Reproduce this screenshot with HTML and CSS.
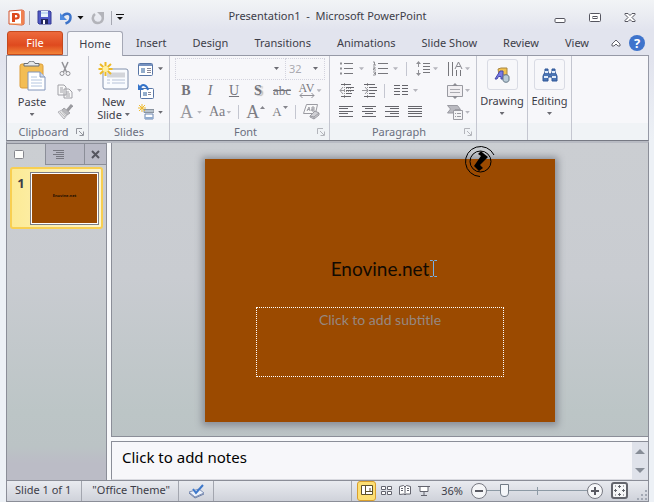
FILE: index.html
```html
<!DOCTYPE html>
<html lang="en">
<head>
<meta charset="utf-8">
<title>Presentation1 - Microsoft PowerPoint</title>
<link rel="stylesheet" href="styles.css">
</head>
<body>
<div class="window">
  <header class="titlebar">
    <div class="quick">
      <button class="tool" aria-label="PowerPoint menu"><svg width="17" height="17" viewBox="0 0 17 17"><path d="M1 2l13-1 2 1v13l-2 1-13-1z" fill="#fff" stroke="#d2502a"/><path d="M13 1l3 1v13l-3 1z" fill="#f08050"/><path d="M2 15h12" stroke="#f5a060"/><path d="M4 4h4.500a3 3 0 0 1 0 6.500H7V13H4z" fill="#dd4a1c"/><path d="M7 6h1a1.200 1.200 0 0 1 0 2.500H7z" fill="#fff"/></svg></button>
      <span class="rule"></span>
      <button class="tool save" aria-label="Save"><svg width="15" height="15" viewBox="0 0 15 15"><path d="M1 1h12l1 1v12H2l-1-1z" fill="#5059c6" stroke="#353b94"/><path d="M4 1h7v6H4z" fill="#e9f2fb"/><path d="M4 9h7v5H4z" fill="#23275d"/><path d="M6 10h2v4H6z" fill="#fff"/><path d="M4 3h7" stroke="#9cc0e5"/></svg></button>
      <button class="tool undo" aria-label="Undo"><svg width="14" height="14" viewBox="0 0 14 14"><path d="M3 6C6 1 12 2 11.500 6.500c0 3-2 5-5 6" fill="none" stroke="#3c73c9" stroke-width="2.500"/><path d="M1 2v7h7z" fill="#4f8be0"/></svg></button>
      <i class="caret black"></i>
      <button class="tool redo" aria-label="Repeat"><svg width="14" height="14" viewBox="0 0 14 14"><path d="M4 3C0 6 2 12 6.500 12S13 8 11 4" fill="none" stroke="#b3b4ba" stroke-width="2.500"/><path d="M6 1h7v7z" fill="#b3b4ba"/></svg></button>
      <span class="rule"></span>
      <button class="tool" aria-label="Customize toolbar"><svg width="8" height="7" viewBox="0 0 8 7"><path d="M0 .5h8" stroke="#111"/><path d="M1 3h6L4 6z" fill="#111"/></svg></button>
    </div>
    <h1>Presentation1 &nbsp;-&nbsp; Microsoft PowerPoint</h1>
    <div class="controls">
      <button class="tool" aria-label="Minimize"><svg width="12" height="12" viewBox="0 0 12 12"><rect x="1" y="6.500" width="10" height="4" rx="1" fill="#fff" stroke="#55555f"/></svg></button>
      <button class="tool" aria-label="Maximize"><svg width="12" height="12" viewBox="0 0 12 12"><rect x=".5" y="1.500" width="11" height="8" rx="1" fill="#fff" stroke="#55555f"/><rect x="4" y="4.500" width="4" height="2" fill="#fff" stroke="#55555f"/></svg></button>
      <button class="tool" aria-label="Close"><svg width="12" height="12" viewBox="0 0 12 12"><path d="M1 1.500h3l2 2 2-2h3v1L8 5.500l3 3v1H8l-2-2-2 2H1v-1l3-3-3-3z" fill="#fff" stroke="#55555f"/></svg></button>
    </div>
  </header>

  <nav class="tabs">
    <button class="tab file">File</button>
    <button class="tab home">Home</button>
    <button class="tab">Insert</button>
    <button class="tab">Design</button>
    <button class="tab">Transitions</button>
    <button class="tab">Animations</button>
    <button class="tab">Slide Show</button>
    <button class="tab">Review</button>
    <button class="tab">View</button>
    <div class="help">
      <button class="tool" aria-label="Minimize the ribbon"><svg width="10" height="8" viewBox="0 0 10 8"><path d="M1 5l4-4 4 4v2H7L5 5 3 7H1z" fill="#fff" stroke="#62626c"/></svg></button>
      <button class="question" aria-label="Help">?</button>
    </div>
  </nav>

  <section class="ribbon">
    <div class="group">
      <div class="body split">
        <button class="big paste"><svg width="27" height="30" viewBox="0 0 27 30"><rect x="1" y="3" width="23" height="24" rx="2" fill="#f3bd54" stroke="#dc9d38"/><path d="M5 5V2.500h4C9-.5 16-.5 16 2.500h4V5z" fill="#e5e8ea" stroke="#696e74"/><path d="M9 11h12l5 5v13H9z" fill="#fff" stroke="#8295ba"/><path d="M21 11v5h5" fill="#cbd7ea" stroke="#8295ba"/><path d="M12 16h6M12 19h11M12 22h11M12 25h11" stroke="#b4c6e0"/></svg><span>Paste</span><i class="caret"></i></button>
        <div class="stack">
          <button class="tool" aria-label="Cut"><svg width="16" height="16" viewBox="0 0 16 16" fill="none" stroke="#929297"><path d="M5 1l4.500 10M11 1L6.500 11" stroke-width="1.500"/><circle cx="5" cy="12.500" r="2"/><circle cx="11" cy="12.500" r="2"/></svg></button>
          <button class="tool" aria-label="Copy"><svg width="16" height="16" viewBox="0 0 16 16" fill="#f8f8f9" stroke="#a0a0a6"><path d="M1 2h6l2 2v8H1zM7 6h5l3 3v6H7z"/><path d="M3 5h3M3 7h3M3 9h3M9 9h3M9 11h4M9 13h4"/></svg><i class="caret pale"></i></button>
          <button class="tool" aria-label="Format Painter"><svg width="16" height="16" viewBox="0 0 16 16"><path d="M15 1l-5 6" stroke="#9a9a9f" stroke-width="3"/><path d="M7 4l6 5-3 2-5-5z" fill="#b8b8bc" stroke="#a4a4a9"/><path d="M5 6l5 5-3 4-6-7z" fill="#e4e4e7" stroke="#b4b4ba"/><path d="M3 8l5 5M5 7l4 5" stroke="#bbb"/></svg></button>
        </div>
      </div>
      <footer><span>Clipboard</span><button class="launch" aria-label="Clipboard options"><svg width="8" height="8" viewBox="0 0 8 8" fill="none" stroke="#92959d"><path d="M.5 6V.5H6M3 3l4 4M7.500 3.500v4h-4"/></svg></button></footer>
    </div>

    <div class="group">
      <div class="body split">
        <button class="big slide-new"><svg width="31" height="30" viewBox="0 0 31 30"><rect x="5" y="8" width="25" height="20" rx="2" fill="#f9fbfe" stroke="#8291ac"/><path d="M9 14h18" stroke="#d3d5da" stroke-width="5"/><path d="M9 19h3M14 19h13M9 22h3M14 22h13" stroke="#b6c2d7"/><path d="M7.500 1v14M.500 8h14M2 3l11 10M13 3L2 13" stroke="#edba25" stroke-width="2"/><circle cx="7.500" cy="8" r="3" fill="#fff0a0"/></svg><span>New</span><span class="inline">Slide <i class="caret"></i></span></button>
        <div class="stack">
          <button class="tool" aria-label="Layout"><svg width="16" height="16" viewBox="0 0 16 16"><rect x=".5" y="2.500" width="14" height="12" rx="1" fill="#fff" stroke="#5875a5"/><path d="M1 4h13" stroke="#7692c0" stroke-width="2"/><path d="M3 7h4v5H3z" fill="#93adcc"/><path d="M9 7.500h4M9 9.500h4M9 11.500h4" stroke="#889"/></svg><i class="caret"></i></button>
          <button class="tool" aria-label="Reset"><svg width="16" height="16" viewBox="0 0 16 16"><rect x="2.500" y="5.500" width="13" height="10" rx="1" fill="#fff" stroke="#5875a5"/><path d="M5 9h4v4H5z" fill="#93adcc"/><path d="M10 9.500h3M10 11.500h3" stroke="#889"/><path d="M2 5c2-5 7-3 8 2" fill="none" stroke="#3473c9" stroke-width="2"/><path d="M0 1v6h6z" fill="#3473c9"/></svg></button>
          <button class="tool" aria-label="Section"><svg width="16" height="16" viewBox="0 0 16 16"><path d="M6 5.500h10v3H6z" fill="#b8c2cc" stroke="#8a939f"/><path d="M7 10h8v5H7z" fill="#fff" stroke="#6d86b0"/><path d="M7 14h8" stroke="#91acd0" stroke-width="2"/><path d="M4 0v8M0 4h8M1 1l6 6M7 1L1 7" stroke="#efbb32"/></svg><i class="caret"></i></button>
        </div>
      </div>
      <footer><span>Slides</span></footer>
    </div>

    <div class="group">
      <div class="body rows">
        <div class="row fields">
          <label class="field font-name"><select aria-label="Font"><option></option></select><i class="caret"></i></label>
          <label class="field font-size"><select aria-label="Font size"><option>32</option></select><i class="caret"></i></label>
        </div>
        <div class="row even">
          <button class="tool glyph"><b>B</b></button>
          <button class="tool glyph"><i>I</i></button>
          <button class="tool glyph"><u>U</u></button>
          <button class="tool glyph shadow"><b>S</b></button>
          <button class="tool glyph strike">abc</button>
          <button class="tool spacing" aria-label="Character spacing"><span class="av">AV<svg width="16" height="5" viewBox="0 0 16 5"><path d="M1 2.500h14M3.500 0L1 2.500 3.500 5M12.500 0L15 2.500 12.500 5" fill="none" stroke="#909097"/></svg></span><i class="caret pale"></i></button>
        </div>
        <div class="row letters">
          <button class="tool glyph large">A<i class="caret pale"></i></button>
          <button class="tool glyph dark">Aa<i class="caret pale"></i></button>
          <span class="rule"></span>
          <button class="tool glyph large dark" aria-label="Grow font">A<svg width="5" height="12" viewBox="0 0 5 12"><path d="M0 3l2.500-3L5 3z" fill="#85858c"/></svg></button>
          <button class="tool glyph small dark" aria-label="Shrink font">A<svg width="5" height="12" viewBox="0 0 5 12"><path d="M0 0h5L2.500 3z" fill="#85858c"/></svg></button>
          <span class="rule"></span>
          <button class="tool" aria-label="Clear formatting"><svg width="17" height="16" viewBox="0 0 17 16" fill="#f9f9fa" stroke="#9b9ba2"><path d="M3.500.5h11l-2 9h-12z"/><path d="M4 7l2-4 1 4M4.500 5.500h2M9 7V3h2v4H9V5h2" fill="none"/><path d="M7 12l5-5 4 2v2l-5 4-4-2z" fill="#d0d0d5"/><path d="M7 12l4 1 5-4M11 13v2" fill="none"/></svg></button>
        </div>
      </div>
      <footer><span>Font</span><button class="launch" aria-label="Font options"><svg width="8" height="8" viewBox="0 0 8 8" fill="none" stroke="#b3b5bb"><path d="M.5 6V.5H6M3 3l4 4M7.500 3.500v4h-4"/></svg></button></footer>
    </div>

    <div class="group">
      <div class="body rows">
        <div class="row para">
          <button class="tool" aria-label="Bullets"><svg width="15" height="15" viewBox="0 0 15 15"><path d="M5 2.500h9M5 7.500h9M5 12.500h9" stroke="#77777c"/><path d="M1 2.500h2M1 7.500h2M1 12.500h2" stroke="#909095" stroke-width="2"/></svg><i class="caret pale"></i></button>
          <button class="tool numbering" aria-label="Numbering"><svg width="15" height="15" viewBox="0 0 15 15"><path d="M5 2.500h10M5 7.500h10M5 12.500h10" stroke="#77777c"/><path d="M0 1h1.500v3M0 4h3M0 6h2v1.500H.5V9H3M0 11h2.500v3H0M1 12.500h1.500" fill="none" stroke="#909095"/></svg><i class="caret pale"></i></button>
          <span class="rule"></span>
          <button class="tool tight" aria-label="Line spacing"><svg width="16" height="17" viewBox="0 0 16 17"><path d="M8 3.500h7M8 6.500h7M8 9.500h7M8 12.500h7" stroke="#77777c"/><path d="M3.500 2v5M3.500 10v5" stroke="#909095"/><path d="M1 4l2.500-3L6 4zM1 13l2.500 3L6 13z" fill="#909095"/></svg><i class="caret pale"></i></button>
          <button class="tool last" aria-label="Text direction"><svg width="16" height="16" viewBox="0 0 16 16" fill="none" stroke="#77777c"><path d="M1.500 1v14M5.500 1v14M9.500 9v6M13.500 9v6"/><path d="M8 8l3.500-7L15 8M9.500 5.500h4" stroke="#85858c"/></svg><i class="caret pale"></i></button>
        </div>
        <div class="row para">
          <button class="tool" aria-label="Decrease indent"><svg width="16" height="15" viewBox="0 0 16 15" fill="none" stroke="#66666c"><path d="M2 1.500h10M7 4.500h8M7 7.500h8M7 10.500h6M2 13.500h10"/><path d="M7 5.500h5M7 8.500h6M5.500 0v15" stroke="#999" stroke-dasharray="1 1"/><path d="M6 7.500H1M4 4L1 7.500 4 11" stroke="#97979c"/></svg></button>
          <button class="tool second" aria-label="Increase indent"><svg width="16" height="15" viewBox="0 0 16 15" fill="none" stroke="#66666c"><path d="M2 1.500h11M7 4.500h8M7 7.500h8M7 10.500h6M2 13.500h11"/><path d="M5.500 0v15" stroke="#999" stroke-dasharray="1 1"/><path d="M0 7.500h6M3 4l3 3.500L3 11" stroke="#97979c"/></svg></button>
          <span class="rule near"></span>
          <button class="tool" aria-label="Columns"><svg width="14" height="13" viewBox="0 0 14 13"><path d="M0 1.500h6M0 4.500h6M0 7.500h6M0 10.500h6M8 1.500h6M8 4.500h6M8 7.500h6M8 10.500h6" stroke="#66666c"/></svg><i class="caret pale"></i></button>
          <button class="tool last" aria-label="Align text"><svg width="16" height="16" viewBox="0 0 16 16"><path d="M.5 2.500h15v11H.5z" fill="#f1eff2" stroke="#999aa1"/><path d="M3 6.500h10M3 9.500h10" stroke="#aaaab0"/><path d="M8 0l3 3H5zM8 16l3-3H5z" fill="#8d8d94"/></svg><i class="caret pale"></i></button>
        </div>
        <div class="row para">
          <button class="tool" aria-label="Align left"><svg width="15" height="12" viewBox="0 0 15 12"><path d="M0 .5h14M0 2.500h9M0 5.500h14M0 7.500h9M0 10.500h14" stroke="#66666c"/></svg></button>
          <button class="tool third" aria-label="Center"><svg width="15" height="12" viewBox="0 0 15 12"><path d="M0 .5h14M3 2.500h8M0 5.500h14M3 7.500h8M0 10.500h14" stroke="#66666c"/></svg></button>
          <button class="tool third" aria-label="Align right"><svg width="15" height="12" viewBox="0 0 15 12"><path d="M0 .5h14M5 2.500h9M0 5.500h14M5 7.500h9M0 10.500h14" stroke="#66666c"/></svg></button>
          <button class="tool third" aria-label="Justify"><svg width="15" height="12" viewBox="0 0 15 12"><path d="M0 .5h14M0 2.500h14M0 5.500h14M0 7.500h14M0 10.500h14" stroke="#66666c"/></svg></button>
          <button class="tool last" aria-label="Convert to SmartArt"><svg width="16" height="16" viewBox="0 0 16 16" stroke="#9b9ba2"><path d="M.5 1.500h10l3 4H8L6 9H.5l3-4z" fill="#b9b9c0"/><path d="M6.500 6.500h9v9h-9z" fill="#f4f4f6"/><path d="M8 9.500h1M8 12.500h1M10 9.500h4M10 12.500h4"/></svg><i class="caret pale"></i></button>
        </div>
      </div>
      <footer><span>Paragraph</span><button class="launch" aria-label="Paragraph options"><svg width="8" height="8" viewBox="0 0 8 8" fill="none" stroke="#b3b5bb"><path d="M.5 6V.5H6M3 3l4 4M7.500 3.500v4h-4"/></svg></button></footer>
    </div>

    <div class="group">
      <button class="collapsed"><span class="tile"><svg width="16" height="16" viewBox="0 0 16 16"><path d="M4 2l3-1h6v7H5z" fill="#f1c14f" stroke="#a98643"/><path d="M1 12l5-8h3v8H7V9.500H4.500L3 12z" fill="#797be5" stroke="#4548ac"/><path d="M9 10c0-3 6-3 6 0v3c0 3-6 3-6 0z" fill="#b9cbd8" stroke="#647787"/></svg></span><span>Drawing</span><i class="caret"></i></button>
      <footer></footer>
    </div>
    <div class="group">
      <button class="collapsed"><span class="tile"><svg width="16" height="16" viewBox="0 0 16 16"><path d="M3 2h3v3l1 2h2l1-2V2h3v3l2 4v5h-5v-4H6v4H1V9l2-4z" fill="#4b75b4" stroke="#2f5697"/><path d="M2 10h4M10 10h4M3 5h3M10 5h3" stroke="#e0ecfb" stroke-width="2"/></svg></span><span>Editing</span><i class="caret"></i></button>
      <footer></footer>
    </div>
    <div class="group rest"><footer></footer></div>
  </section>

  <main class="work">
    <aside class="panel">
      <div class="panel-tabs">
        <button class="tool slides" aria-label="Slides"><svg width="11" height="11" viewBox="0 0 11 11"><rect x=".5" y="1.500" width="9" height="8" rx="1" fill="#fdfdfb" stroke="#85868d"/></svg></button>
        <button class="tool outline" aria-label="Outline"><svg width="11" height="9" viewBox="0 0 11 9"><path d="M0 .5h11M3 2.500h8M0 4.500h11M3 6.500h8M3 8.500h8" stroke="#777881"/></svg></button>
        <button class="tool close" aria-label="Close panel"><svg width="9" height="9" viewBox="0 0 9 9"><path d="M1 1l7 7M8 1L1 8" stroke="#55565f" stroke-width="2"/></svg></button>
      </div>
      <button class="thumb"><span class="number">1</span><span class="mini">Enovine.net</span></button>
    </aside>
    <div class="editor">
      <div class="canvas">
        <article class="slide">
          <h2>Enovine.net<svg class="ibeam" width="9" height="17" viewBox="0 0 9 17"><path d="M1 .5h2.500l1 1 1-1H8M1 16.500h2.500l1-1 1 1H8M4.500 1v15" fill="none" stroke="#77b1e6"/></svg></h2>
          <div class="subtitle">Click to add subtitle</div>
          <svg class="busy" width="32" height="32" viewBox="0 0 32 32"><path d="M30 9A15 15 0 1 0 16 30.500" fill="none" stroke="#000"/><circle cx="16.500" cy="15.500" r="10.500" fill="none" stroke="#000"/><path d="M14 8l3-3 3 3-3 2zM19 7l5 4-8 8 3 3-4 3-5-5z" fill="#000"/></svg>
        </article>
      </div>
      <div class="notes">
        <p>Click to add notes</p>
        <div class="scroll">
          <button class="tool" aria-label="Scroll up"><svg width="10" height="6" viewBox="0 0 10 6"><path d="M0 6l5-5 5 5z" fill="#878d97"/></svg></button>
          <button class="tool" aria-label="Scroll down"><svg width="10" height="6" viewBox="0 0 10 6"><path d="M0 0l5 5 5-5z" fill="#878d97"/></svg></button>
        </div>
      </div>
    </div>
  </main>

  <footer class="status">
    <span class="cell">Slide 1 of 1</span>
    <span class="cell theme">"Office Theme"</span>
    <button class="tool spell" aria-label="Spelling"><svg width="17" height="16" viewBox="0 0 17 16"><path d="M1 9l6 5 9-4-5-4z" fill="#edf2fa" stroke="#7e91b8"/><path d="M1 10l6 5 9-4" fill="none" stroke="#6e81a8"/><path d="M5 6l3 4 7-8" fill="none" stroke="#3d78cb" stroke-width="2"/></svg></button>
    <div class="views">
      <button class="tool current" aria-label="Normal"><svg width="12" height="11" viewBox="0 0 12 11" fill="#fff" stroke="#5c512c"><path d="M.5.5h11v9H.5zM4.500.5v9M4.500 6.500h7M9 3v3"/></svg></button>
      <button class="tool" aria-label="Slide sorter"><svg width="11" height="11" viewBox="0 0 11 11" fill="#fff" stroke="#63646e"><path d="M.5 1.500h4v3h-4zM6.500 1.500h4v3h-4zM.5 6.500h4v3h-4zM6.500 6.500h4v3h-4z"/></svg></button>
      <button class="tool" aria-label="Reading view"><svg width="12" height="11" viewBox="0 0 12 11" fill="#fff" stroke="#63646e"><path d="M.5 1.500l4-1L6 2l1.500-1.500 4 1v7.500L7 9l-1 1-1-1-4.500.5zM6 2v8M2 3.500h2M2 5.500h2M8 3.500h2M8 5.500h2"/></svg></button>
      <button class="tool" aria-label="Slide show"><svg width="12" height="11" viewBox="0 0 12 11" fill="#fff" stroke="#63646e"><path d="M0 1.500h12M2 2v4.500h8V2M6 7v3M3 10.500h6"/></svg></button>
    </div>
    <div class="zoom">
      <label for="zoom">36%</label>
      <button class="round" aria-label="Zoom out"><svg width="8" height="8" viewBox="0 0 8 8"><path d="M0 4h8" stroke="#5a5b63" stroke-width="2"/></svg></button>
      <input id="zoom" type="range" min="0" max="100" value="14">
      <button class="round" aria-label="Zoom in"><svg width="8" height="8" viewBox="0 0 8 8"><path d="M0 4h8M4 0v8" stroke="#5a5b63" stroke-width="2"/></svg></button>
    </div>
    <button class="tool" aria-label="Fit slide to window"><svg width="17" height="17" viewBox="0 0 17 17" fill="none" stroke="#63656c"><rect x="1" y="1" width="15" height="15" rx="2" fill="#f6f7f8" stroke-width="2"/><path d="M8.500 3v3M8.500 11v3M3 8.500h3M11 8.500h3M7 4.500h3M7 12.500h3M4.500 7v3M12.500 7v3M4 4h1M12 4h1M4 13h1M12 13h1"/></svg></button>
    <svg class="grip" width="12" height="12" viewBox="0 0 12 12"><path d="M9 1h2v2H9zM5 5h2v2H5zM9 5h2v2H9zM1 9h2v2H1zM5 9h2v2H5zM9 9h2v2H9z" fill="#a2a8b3"/></svg>
  </footer>
</div>
</body>
</html>
```

FILE: styles.css
```css
* { box-sizing: border-box; }

:root {
  --text: #3d3d48;
  --line: #8b8e98;
  --soft: #c4c6d0;
  --paper: #f7f7fa;
  --slide: #9b4a00;
}

body {
  margin: 0;
  font: 11px/16px "Noto Sans", "Open Sans", sans-serif;
  color: var(--text);
}

button, select, input {
  margin: 0;
  padding: 0;
  border: 0;
  background: none;
  font: inherit;
  color: inherit;
  white-space: nowrap;
}

svg { display: block; flex: none; }

.window {
  display: flex;
  flex-direction: column;
  min-height: 100vh;
  padding: 0 5px 1px 6px;
  background: linear-gradient(#f2f4f6, #e2e4ee 30px, #e2e4ee 60px, #edf1f6 140px);
}

.tool { display: flex; align-items: center; justify-content: center; }

.caret {
  flex: none;
  width: 5px;
  height: 3px;
  background: #6b6b72;
  clip-path: polygon(0 0, 100% 0, 50% 100%);
}
.caret.pale { background: #b6b6bd; }
.caret.black { width: 7px; height: 4px; background: #111; }

.rule { flex: none; width: 1px; height: 14px; background: #a6a8b2; }

/* title bar */
.titlebar {
  display: grid;
  grid-template-columns: 1fr auto 1fr;
  align-items: center;
  height: 31px;
  padding-top: 4px;
}
.titlebar h1 { margin: 0; font-size: 11px; font-weight: 400; line-height: 16px; padding-bottom: 4px; }
.quick { display: flex; align-items: center; gap: 4px; padding-left: 2px; }
.quick .save { margin: 0 3px; }
.quick .redo { margin: 0 2px 0 3px; }
.controls { display: flex; justify-content: flex-end; gap: 23px; padding-right: 13px; }

/* ribbon tabs */
.tabs { display: flex; height: 24px; padding-left: 1px; }
.tab { flex: none; padding: 0 13px; border-radius: 3px 3px 0 0; }
.file {
  width: 56px;
  margin-right: 4px;
  border: 1px solid #c4491e;
  color: #fff;
  background: linear-gradient(#ed6a3c, #df4a1e 60%, #f28338);
}
.home {
  position: relative;
  width: 56px;
  margin-bottom: -1px;
  padding: 0;
  border: 1px solid #a5a8b5;
  border-bottom: 0;
  background: var(--paper);
}
.help { display: flex; align-items: center; gap: 8px; margin-left: auto; padding-right: 4px; }
.question {
  width: 16px;
  height: 16px;
  border-radius: 8px;
  font-weight: 700;
  font-size: 13px;
  line-height: 16px;
  color: #fff;
  background: #3f74cc;
}

/* ribbon */
.ribbon {
  display: grid;
  grid-template-columns: 82px 81px 160px 147px 51px 44px 1fr;
  height: 86px;
  border: 1px solid #9699a6;
  border-bottom: 1px solid #777a84;
  background: var(--paper);
}
.group { display: flex; flex-direction: column; min-width: 0; border-right: 1px solid var(--soft); }
.group.rest { border-right: 0; }
.group footer {
  display: flex;
  align-items: center;
  height: 17px;
  margin-top: auto;
  padding: 0 4px;
  color: #6a6e7e;
  background: #f0f3f6;
}
.group footer span { flex: 1; text-align: center; }
.body { height: 67px; }
.split { display: flex; }
.big { display: flex; flex-direction: column; align-items: center; width: 50px; padding-top: 5px; line-height: 13px; }
.big svg { margin-bottom: 4px; }
.big .caret { margin-top: 5px; }
.slide-new { width: 49px; }
.inline { display: flex; gap: 3px; }
.stack { display: flex; flex-direction: column; flex: 1; padding-top: 2px; }
.stack .tool { height: 22px; justify-content: flex-start; gap: 4px; }
.rows { display: flex; flex-direction: column; padding-top: 2px; }
.row { display: flex; align-items: center; height: 22px; padding-left: 4px; }
.row .rule { background: var(--soft); }

.fields { padding: 0 4px 0 5px; }
.field { position: relative; display: flex; height: 22px; border: 1px dotted #d3d3de; }
.field select { appearance: none; width: 100%; padding-left: 3px; color: #aaaab0; opacity: 1; }
.field .caret { position: absolute; right: 6px; top: 8px; }
.font-name { flex: 1; }
.font-size { width: 40px; margin-left: -1px; }

.glyph { font-family: "Liberation Serif", serif; font-size: 14px; color: #74747b; }
.even .tool { width: 24px; }
.even .spacing { width: 32px; gap: 2px; }
.shadow { text-shadow: 2px 1px 1px #bbb; }
.strike { font-size: 13px; text-decoration: line-through; }
.av { font: 12px/9px "Liberation Serif", serif; color: #77777e; }
.letters { gap: 7px; padding-left: 10px; }
.letters .tool { gap: 4px; }
.letters .large { font-size: 18px; color: #97979d; }
.letters .small { font-size: 13px; }
.letters .dark { color: #7d7d84; gap: 1px; }

.para { padding: 0 6px 0 9px; }
.para .tool { gap: 5px; }
.para .tight { gap: 2px; }
.para .rule { margin: 0 8px; }
.para .rule.near { margin: 0 9px 0 6px; }
.para .last { margin-left: auto; gap: 2px; }
.numbering { margin-left: 9px; }
.para .second { margin-left: 7px; }
.para .third { margin-left: 8px; }

.collapsed { display: flex; flex-direction: column; align-items: center; padding-top: 3px; }
.tile { display: grid; place-items: center; width: 31px; height: 31px; margin-bottom: 3px; border: 1px solid #d9dbe4; border-radius: 3px; }
.collapsed .caret { margin-top: 3px; }

/* work area */
.work {
  display: flex;
  flex: 1;
  border: solid var(--line);
  border-width: 2px 1px 0;
  border-top-color: #b8bbc3;
  background: linear-gradient(#cbced2, #c9ccd1 40%, #bcc5c6 80%, #bbc3c5 90%, #bbbcc6 95%);
}
.panel { width: 100px; border-right: 1px solid var(--line); }
.panel-tabs { display: flex; height: 22px; border-top: 1px solid var(--line); }
.panel-tabs .tool { border: solid var(--line); border-width: 0 0 1px 1px; background: #babbc7; }
.panel-tabs .slides { width: 38px; padding-right: 14px; border: 0; background: none; }
.panel-tabs .outline { width: 39px; padding-right: 14px; }
.panel-tabs .close { flex: 1; }
.thumb {
  display: flex;
  width: 93px;
  height: 62px;
  margin: 2px 0 0 3px;
  padding: 4px 2px 4px 0;
  border: 2px solid #f8cf52;
  border-radius: 3px;
  background: linear-gradient(90deg, #fcea95, #fdf6cf);
}
.number { width: 18px; padding-top: 2px; font-size: 13px; font-weight: 700; }
.mini {
  display: grid;
  place-items: center;
  flex: 1;
  height: 53px;
  margin-top: -1px;
  border: 1px solid #7c7e86;
  outline: 1px solid #fff;
  outline-offset: -2px;
  font-size: 4px;
  font-weight: 700;
  line-height: 4px;
  padding-bottom: 5px;
  color: #1c0d00;
  background: var(--slide);
}
.editor { display: flex; flex: 1; flex-direction: column; min-width: 0; border-left: 4px solid #f8f9fb; }
.canvas {
  display: grid;
  flex: 1;
  place-items: center;
  padding: 16px 0 14px;
  border: solid var(--line);
  border-width: 0 0 1px 1px;
}
.slide {
  position: relative;
  display: flex;
  flex-direction: column;
  align-items: center;
  width: 65.3%;
  aspect-ratio: 4 / 3;
  background: var(--slide);
  box-shadow: 0 1px 7px 3px #8b8f97;
  font-family: Lato, sans-serif;
}
.slide h2 { position: relative; margin: 98px 0 0; font-size: 19px; font-weight: 400; line-height: 24px; color: #120a02; }
.subtitle {
  width: 71%;
  height: 70px;
  margin-top: 26px;
  padding-top: 2px;
  border: 1px dotted #fff;
  font-size: 14px;
  line-height: 20px;
  text-align: center;
  color: #968880;
}
.ibeam { position: absolute; left: 100%; top: 3px; }
.busy { position: absolute; right: 59px; top: -13px; }
.notes {
  display: flex;
  height: 39px;
  margin-top: 4px;
  border: solid var(--line);
  border-width: 1px 0 0 1px;
  outline: 4px solid #f8f9fb;
  outline-offset: 0;
  clip-path: inset(-4px 0 0 0);
  background: var(--paper);
}
.notes p { flex: 1; margin: 0; padding: 4px 10px; font-size: 15px; line-height: 22px; color: #000; }
.scroll { display: flex; flex-direction: column; justify-content: space-between; width: 16px; padding: 6px 3px; background: #dfe2ea; }

/* status bar */
.status {
  display: flex;
  align-items: center;
  height: 22px;
  border: 1px solid var(--line);
  background: linear-gradient(#e9ebf0, #cfd2da);
}
.cell { align-self: stretch; padding: 1px 10px 0 8px; border-right: 1px solid #a3a6af; }
.theme { padding-right: 8px; padding-left: 10px; }
.spell { align-self: stretch; width: 35px; border-right: 1px solid #a3a6af; }
.views { display: flex; align-self: stretch; gap: 1px; margin-left: auto; padding-left: 5px; border-left: 1px solid #a3a6af; }
.views .tool { width: 18px; border-radius: 3px; }
.views .current { width: 19px; border: 1px solid #d99f2c; background: #fcdf74; }
.zoom { display: flex; align-items: center; margin: 0 8px; }
.zoom label { margin-right: 8px; }
.zoom + .tool { margin-right: 8px; }
.round { display: grid; place-items: center; width: 16px; height: 16px; border: 1px solid #777982; border-radius: 8px; background: #f5f6f8; }
#zoom {
  appearance: none;
  width: 100px;
  height: 18px;
  background:
    linear-gradient(#8d9aa5, #8d9aa5) center / 1px 8px no-repeat,
    linear-gradient(#8d9aa5, #8d9aa5) center / 100% 1px no-repeat;
}
#zoom::-webkit-slider-thumb {
  appearance: none;
  width: 9px;
  height: 13px;
  border: 1px solid #717b86;
  border-radius: 1px 1px 5px 5px;
  background: #f4f6f9;
}
.grip { align-self: flex-end; }
```
